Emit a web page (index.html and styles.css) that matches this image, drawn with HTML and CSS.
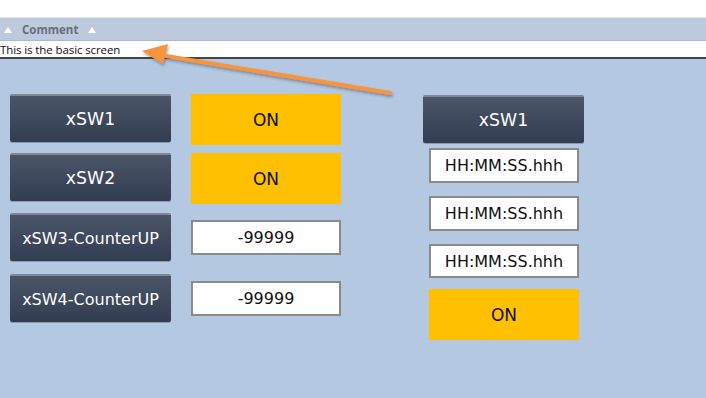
FILE: index.html
```html
<!DOCTYPE html>
<html>
<head>
<meta charset="utf-8">
<link rel="stylesheet" href="styles.css">
</head>
<body>
<div class="page">
  <div class="topgap"></div>
  <div class="colhead">
    <span class="tri"></span>
    <span class="colname">Comment</span>
    <span class="tri"></span>
  </div>
  <div class="commentrow">This is the basic screen</div>
  <div class="main">
    <div class="left">
      <div class="row r1">
        <div class="btn big">xSW1</div>
        <div class="on">ON</div>
      </div>
      <div class="row r2">
        <div class="btn big">xSW2</div>
        <div class="on">ON</div>
      </div>
      <div class="row r3">
        <div class="btn">xSW3-CounterUP</div>
        <div class="field">-99999</div>
      </div>
      <div class="row r4">
        <div class="btn">xSW4-CounterUP</div>
        <div class="field">-99999</div>
      </div>
    </div>
    <div class="right">
      <div class="btn big">xSW1</div>
      <div class="field tf t1">HH:MM:SS.hhh</div>
      <div class="field tf t2">HH:MM:SS.hhh</div>
      <div class="field tf t3">HH:MM:SS.hhh</div>
      <div class="on ron">ON</div>
    </div>
  </div>
  <svg class="arrow" width="706" height="398" viewBox="0 0 706 398">
    <defs>
      <filter id="sh" x="-10%" y="-50%" width="120%" height="200%">
        <feDropShadow dx="1" dy="2" stdDeviation="1.5" flood-color="#333" flood-opacity="0.45"/>
      </filter>
    </defs>
    <g filter="url(#sh)">
      <line x1="390" y1="93" x2="160" y2="55" stroke="#f7943c" stroke-width="4" stroke-linecap="round"/>
      <polygon points="142,51 168,44 163,64" fill="#f7943c"/>
    </g>
  </svg>
</div>
</body>
</html>
```
FILE: styles.css
```css
html, body {
  margin: 0;
  padding: 0;
}
body {
  width: 706px;
  height: 398px;
  overflow: hidden;
  background: #b4c8e2;
  font-family: "DejaVu Sans", sans-serif;
}
.page {
  position: relative;
  width: 706px;
  height: 398px;
  display: flex;
  flex-direction: column;
}
.topgap {
  height: 18px;
  background: #ffffff;
  border-bottom: 1px solid #e2e6ee;
  box-sizing: border-box;
}
.colhead {
  height: 23px;
  background: #bdcadd;
  border-bottom: 1px solid #aeb9cb;
  box-sizing: border-box;
  display: flex;
  align-items: center;
  padding-left: 4px;
}
.tri {
  width: 0;
  height: 0;
  border-left: 4px solid transparent;
  border-right: 4px solid transparent;
  border-bottom: 6px solid #ffffff;
  margin-top: 1px;
}
.colname {
  font-family: "Open Sans", "Noto Sans", sans-serif;
  font-weight: 700;
  font-size: 11.5px;
  color: #6a6e78;
  margin-left: 10px;
  margin-right: 10px;
}
.commentrow {
  height: 16px;
  background: #ffffff;
  font-family: "Open Sans", "Noto Sans", sans-serif;
  font-size: 11.5px;
  line-height: 17px;
  color: #111;
  letter-spacing: -0.1px;
}
.main {
  flex: 1;
  border-top: 2px solid #454545;
  display: flex;
  align-items: flex-start;
}
.left {
  display: flex;
  flex-direction: column;
  padding-top: 35px;
  padding-left: 10px;
}
.row {
  display: flex;
  align-items: flex-start;
  gap: 20px;
}
.r2 { margin-top: 8px; }
.r3 { margin-top: 9px; }
.r4 { margin-top: 13px; }
.btn {
  width: 161px;
  height: 48px;
  box-sizing: border-box;
  border-radius: 2px;
  border-top: 2px solid #7d8797;
  background: linear-gradient(#4b5568, #323d52);
  color: #ffffff;
  font-size: 16px;
  display: flex;
  align-items: center;
  justify-content: center;
  box-shadow: 0 1px 0 rgba(60,70,90,0.35);
}
.btn.big {
  font-size: 17.3px;
}
.on {
  width: 150px;
  height: 51px;
  background: #ffc000;
  color: #111;
  font-size: 17px;
  display: flex;
  align-items: center;
  justify-content: center;
}
.field {
  width: 150px;
  height: 35px;
  box-sizing: border-box;
  border: 2px solid #8a8a8a;
  background: #ffffff;
  color: #111;
  font-size: 16px;
  display: flex;
  align-items: center;
  justify-content: center;
}
.r3 .field, .r4 .field { margin-top: 7px; }
.right {
  margin-left: 82px;
  padding-top: 36px;
  display: flex;
  flex-direction: column;
}
.right .tf {
  margin-left: 6px;
  height: 35px;
}
.t1 { margin-top: 5px; }
.t2 { margin-top: 13px; }
.t3 { margin-top: 13px; height: 34px !important; }
.ron {
  margin-left: 6px;
  margin-top: 11px;
}
.arrow {
  position: absolute;
  left: 0;
  top: 0;
  pointer-events: none;
}
```
